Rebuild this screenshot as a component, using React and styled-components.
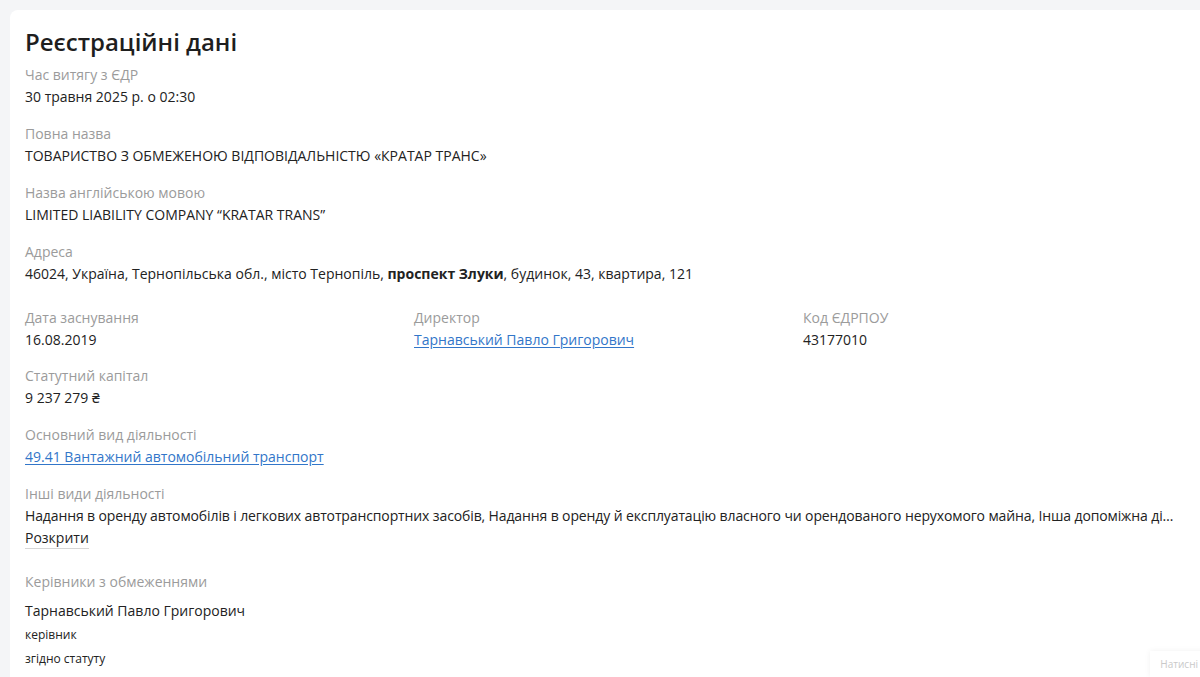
import React from "react";
import styled, { createGlobalStyle } from "styled-components";

const GlobalStyle = createGlobalStyle`
    html, body {
        margin: 0;
        padding: 0;
        background: #f4f5f7;
        overflow: hidden;
    }

    body {
        font-family: "Open Sans", "Noto Sans", sans-serif;
        color: #222;
    }
`;

const Page = styled.div`
    width: 1200px;
    height: 677px;
    padding: 10px 0 0 10px;
    box-sizing: border-box;
    overflow: hidden;
    position: relative;
`;

const Card = styled.section`
    width: 1230px;
    min-height: 700px;
    background: #fff;
    border-radius: 8px;
    padding: 16px 15px 0 15px;
    box-sizing: border-box;
`;

const Title = styled.h2`
    margin: 0 0 6px;
    font-size: 24px;
    line-height: 32px;
    font-weight: 600;
    color: #1e1e1e;
`;

const Content = styled.div`
    width: 1167px;
    font-size: 14px;
    line-height: 22px;
`;

const Field = styled.div`
    margin-bottom: ${(p) => (p.$gap === undefined ? 15 : p.$gap)}px;
    min-width: 0;
`;

const Label = styled.div`
    font-size: 14px;
    line-height: 22px;
    color: #9b9b9b;
`;

const Value = styled.div`
    font-size: 14px;
    line-height: 22px;
    color: #222;

    b {
        font-weight: 700;
    }
`;

const Ellipsis = styled(Value)`
    width: 1156px;
    white-space: nowrap;
    overflow: hidden;
    text-overflow: ellipsis;
    letter-spacing: -0.12px;
`;

const Link = styled.a`
    display: block;
    width: fit-content;
    font-size: 14px;
    line-height: 22px;
    color: #3276c9;
    text-decoration: underline;
    text-underline-offset: 2px;
`;

const Toggle = styled.span`
    display: block;
    width: fit-content;
    font-size: 14px;
    line-height: 21px;
    color: #222;
    border-bottom: 1px solid #d6d6d6;
    cursor: pointer;
`;

const Grid = styled.div`
    display: grid;
    grid-template-columns: repeat(3, 1fr);
    margin-top: 22px;

    & > div {
        margin-bottom: 14px;
    }
`;

const Person = styled.div`
    margin-top: 6px;
    font-size: 14px;
    line-height: 24px;
    color: #222;
`;

const Note = styled.div`
    font-size: 12px;
    line-height: 24px;
    color: #222;
`;

const Hint = styled.div`
    position: absolute;
    right: -12px;
    bottom: 0;
    background: #fff;
    box-shadow: 0 0 6px rgba(0, 0, 0, 0.06);
    padding: 6px 14px 6px 10px;
    font-size: 10px;
    line-height: 14px;
    color: #c9c9c9;
`;

const App = () => (
    <Page>
        <GlobalStyle />
        <Card>
            <Title>Реєстраційні дані</Title>
            <Content>
                <Field>
                    <Label>Час витягу з ЄДР</Label>
                    <Value>30 травня 2025 р. о 02:30</Value>
                </Field>
                <Field>
                    <Label>Повна назва</Label>
                    <Value>ТОВАРИСТВО З ОБМЕЖЕНОЮ ВІДПОВІДАЛЬНІСТЮ «КРАТАР ТРАНС»</Value>
                </Field>
                <Field>
                    <Label>Назва англійською мовою</Label>
                    <Value>LIMITED LIABILITY COMPANY “KRATAR TRANS”</Value>
                </Field>
                <Field $gap={0}>
                    <Label>Адреса</Label>
                    <Value>
                        46024, Україна, Тернопільська обл., місто Тернопіль, <b>проспект Злуки</b>, будинок, 43, квартира, 121
                    </Value>
                </Field>
                <Grid>
                    <Field>
                        <Label>Дата заснування</Label>
                        <Value>16.08.2019</Value>
                    </Field>
                    <Field>
                        <Label>Директор</Label>
                        <Link href="#">Тарнавський Павло Григорович</Link>
                    </Field>
                    <Field>
                        <Label>Код ЄДРПОУ</Label>
                        <Value>43177010</Value>
                    </Field>
                </Grid>
                <Field>
                    <Label>Статутний капітал</Label>
                    <Value>9 237 279 ₴</Value>
                </Field>
                <Field>
                    <Label>Основний вид діяльності</Label>
                    <Link href="#">49.41 Вантажний автомобільний транспорт</Link>
                </Field>
                <Field $gap={22}>
                    <Label>Інші види діяльності</Label>
                    <Ellipsis>
                        Надання в оренду автомобілів і легкових автотранспортних засобів, Надання в оренду й експлуатацію власного чи орендованого нерухомого майна, Інша допоміжна діяльність у сфері транспорту
                    </Ellipsis>
                    <Toggle>Розкрити</Toggle>
                </Field>
                <Field>
                    <Label>Керівники з обмеженнями</Label>
                    <Person>Тарнавський Павло Григорович</Person>
                    <Note>керівник</Note>
                    <Note>згідно статуту</Note>
                </Field>
            </Content>
        </Card>
        <Hint>Натисні</Hint>
    </Page>
);

export default App;
